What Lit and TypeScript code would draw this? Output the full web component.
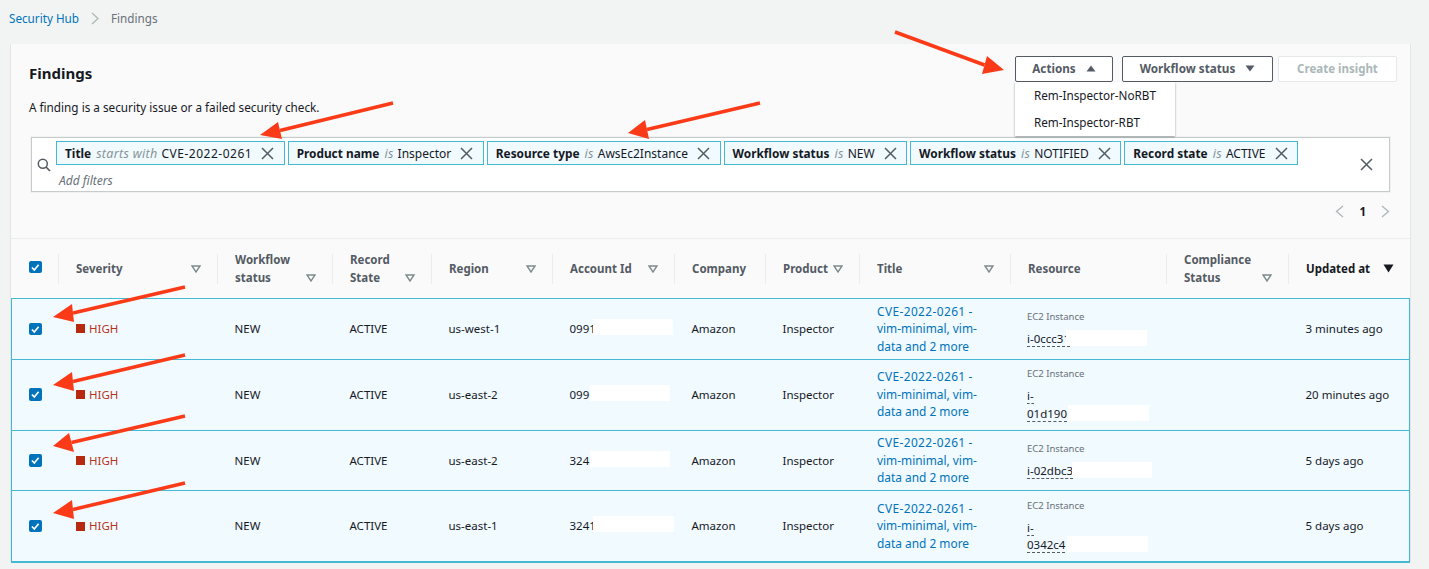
import { LitElement, html, css, svg } from "lit";
import { customElement } from "lit/decorators.js";

const COLS = [
  { label: "Severity", sort: true },
  { label: "Workflow status", sort: true },
  { label: "Record State", sort: true },
  { label: "Region", sort: true },
  { label: "Account Id", sort: true },
  { label: "Company", sort: false },
  { label: "Product", sort: true },
  { label: "Title", sort: true },
  { label: "Resource", sort: false },
  { label: "Compliance Status", sort: true },
  { label: "Updated at", sort: true, active: true },
];

// acctShift / idShift: how far the white redaction box sits from the end of the text
const ROWS = [
  { region: "us-west-1", account: "0991", acctMask: 80, acctShift: -3, id: ["i-0ccc31"], idMask: 81, idShift: -4, updated: "3 minutes ago" },
  { region: "us-east-2", account: "099", acctMask: 80, acctShift: 1, id: ["i-", "01d190"], idMask: 81, idShift: 1, updated: "20 minutes ago" },
  { region: "us-east-2", account: "324", acctMask: 80, acctShift: 1, id: ["i-02dbc3"], idMask: 80, idShift: -1, updated: "5 days ago" },
  { region: "us-east-1", account: "3241", acctMask: 81, acctShift: -3, id: ["i-", "0342c4"], idMask: 81, idShift: 2, updated: "5 days ago" },
];

const TOKENS = [
  ["Title", "starts with", "CVE-2022-0261"],
  ["Product name", "is", "Inspector"],
  ["Resource type", "is", "AwsEc2Instance"],
  ["Workflow status", "is", "NEW"],
  ["Workflow status", "is", "NOTIFIED"],
  ["Record state", "is", "ACTIVE"],
];

// shaft start, tip, then the two back corners of the head
const ARROWS = [
  [895, 32, 1004, 70, 987, 56, 982, 74],
  [393, 103, 260, 135, 278, 122, 282, 139],
  [760, 103, 628, 133, 645, 120, 649, 139],
  [185, 287, 53, 317, 72, 304, 74, 322],
  [185, 355, 53, 385, 72, 372, 74, 391],
  [185, 416, 53, 446, 69, 433, 74, 452],
  [185, 483, 53, 513, 72, 500, 74, 519],
];

const closeIcon = html`<svg class="x" viewBox="0 0 13 13" width="13" height="13">
  <path d="M1 1l11 11M12 1L1 12" fill="none" stroke="#545b64" stroke-width="1.5" />
</svg>`;

@customElement("app-root")
export class AppRoot extends LitElement {
  static styles = css`
    :host {
      display: block;
      position: relative;
      height: 569px;
      overflow: hidden;
      background: #f2f3f3;
      font-family: "Noto Sans", "Liberation Sans", sans-serif;
      font-size: 12px;
      color: #16191f;
    }
    .crumbs {
      height: 44px;
      box-sizing: border-box;
      padding: 10px 0 0 9px;
      display: flex;
      align-items: flex-start;
      line-height: 17px;
      font-size: 11.7px;
      color: #687078;
    }
    .crumbs a { color: #0073bb; }
    .crumbs svg { margin: 2px 12px 0 12px; }
    .card {
      margin: 0 19px 0 11px;
      background: #fafafa;
      box-shadow: -1px 0 0 #e3e5e6, 1px 0 0 #e3e5e6;
      height: 518px;
    }
    .top {
      position: relative;
      display: flex;
      justify-content: space-between;
      padding: 12px 13px 0 18px;
    }
    h1 {
      margin: 8px 0 0;
      font-size: 15px;
      line-height: 18px;
      font-weight: 700;
    }
    .buttons { display: flex; }
    .btn {
      height: 26px;
      box-sizing: border-box;
      padding-bottom: 2px;
      border: 1px solid #545b64;
      border-radius: 2px;
      background: #fff;
      color: #545b64;
      font-weight: 700;
      font-size: 11.7px;
      display: flex;
      align-items: center;
      justify-content: center;
      gap: 10px;
    }
    .btn.actions { width: 98px; margin-right: 9px; }
    .btn.status { width: 151px; margin-right: 5px; }
    .btn.create {
      width: 119px;
      border-color: #e6e9e9;
      color: #aab7b8;
      font-size: 11.5px;
    }
    .menu {
      position: absolute;
      left: 1004px;
      top: 38px;
      width: 160px;
      height: 54px;
      background: #fff;
      box-shadow: 0 1px 2px rgba(0, 28, 36, 0.4);
      z-index: 2;
    }
    .menu div {
      height: 26.5px;
      line-height: 26.5px;
      padding-left: 19px;
      font-size: 11.7px;
      color: #16191f;
    }
    .desc {
      margin: 17px 0 0 18px;
      line-height: 17px;
      font-size: 11.74px;
    }
    .filter {
      display: flex;
      margin: 21px 20px 0 20px;
      height: 55px;
      box-sizing: border-box;
      background: #fff;
      border: 1px solid #c6cbcb;
      box-shadow: 0 0 0 1px #f0f1f1;
    }
    .search { width: 24px; flex: none; padding: 20px 0 0 5px; box-sizing: border-box; }
    .filter-main { flex: 1; padding-top: 3px; }
    .tokens { display: flex; gap: 3px; }
    .token {
      height: 24px;
      box-sizing: border-box;
      border: 1px solid #44b9d6;
      background: #f1faff;
      padding: 0 9.5px 0 8px;
      display: flex;
      align-items: center;
      white-space: nowrap;
      font-size: 12px;
    }
    .token b { font-weight: 700; font-size: 11.85px; }
    .token i { color: #879596; margin: 0 4px 0 5px; font-size: 12.5px; letter-spacing: 0.3px; }
    .token .num { letter-spacing: 0.5px; }
    .token .x { margin-left: 9px; }
    .add {
      margin: 8px 0 0 3px;
      font-style: italic;
      color: #687078;
      font-size: 12px;
      line-height: 16px;
    }
    .clear { width: 46px; flex: none; display: flex; align-items: center; justify-content: center; }
    .pager {
      display: flex;
      justify-content: flex-end;
      align-items: center;
      height: 39px;
      padding-right: 20px;
      gap: 15px;
      font-weight: 700;
      font-size: 11.5px;
    }
    .grid {
      display: grid;
      grid-template-columns: 47px 159px 115px 99px 121px 122px 91px 94px 151px 156px 122px 122px;
    }
    .head {
      margin-top: 7px;
      height: 60px;
      border-top: 1px solid #eaeded;
      box-sizing: border-box;
      align-items: center;
    }
    .hc {
      position: relative;
      height: 30px;
      box-sizing: border-box;
      padding: 0 16px 0 18px;
      display: flex;
      align-items: center;
    }
    .hc::before {
      content: "";
      position: absolute;
      left: 0;
      top: 0;
      bottom: 0;
      width: 1px;
      background: #eaeded;
    }
    .hc.has-check::before { display: none; }
    .hc.has-check { padding: 0 0 3px 18px; }
    .hc-inner {
      flex: 1;
      display: flex;
      align-items: flex-end;
      justify-content: space-between;
      font-weight: 700;
      font-size: 11.5px;
      line-height: 17.5px;
      color: #545b64;
    }
    .hc-inner.active { color: #16191f; }
    .hc-inner svg { flex: none; margin: 0 0 4px 4px; }
    .check {
      width: 12.5px;
      height: 12.5px;
      display: block;
      border-radius: 2px;
      background: #0073bb;
    }
    .row {
      background: #f1faff;
      border-top: 1px solid #44b9d6;
      box-sizing: border-box;
      box-shadow: inset 1px 0 0 #44b9d6, inset -1px 0 0 #44b9d6;
      align-items: center;
      font-size: 11.5px;
      line-height: 17.5px;
    }
    .row.last { border-bottom: 2px solid #44b9d6; }
    .cell { padding: 0 8px 0 17.5px; }
    .cell.check-cell { padding: 0 0 0 18px; }
    .cell.title { padding: 3.5px 8px 3.5px 18px; color: #0073bb; font-size: 11.9px; }
    .cell.title span { letter-spacing: 0.4px; }
    .cell.res { padding: 7.5px 0 7.5px 17px; }
    .cell.account { padding-right: 0; }
    .cell.account .mask { margin-top: -1px; }
    .nowrap { white-space: nowrap; }
    .high { color: #b7341a; display: flex; align-items: center; gap: 4.5px; }
    .high span {
      width: 9px;
      height: 9px;
      background: #b7290f;
    }
    .res-type {
      font-size: 9.5px;
      line-height: 14px;
      color: #687078;
      margin-bottom: 6px;
    }
    .res-id { border-bottom: 1px dashed #545b64; }
    .mask {
      display: inline-block;
      vertical-align: top;
      height: 16px;
      background: #fff;
    }
    .arrows {
      position: absolute;
      left: 0;
      top: 0;
      z-index: 3;
      pointer-events: none;
    }
  `;

  private sortIcon(active?: boolean) {
    if (active) {
      return html`<svg width="11" height="9" viewBox="0 0 11 9"><path d="M0.5 0.5h10L5.5 8.5z" fill="#16191f" /></svg>`;
    }
    return html`<svg width="10" height="8" viewBox="0 0 10 8"><path d="M1 1h8L5 7z" fill="#fafafa" stroke="#7d8b8c" stroke-width="1.4" /></svg>`;
  }

  private checkbox() {
    return html`<svg class="check" viewBox="0 0 13 13">
      <path d="M3 6.8l2.5 2.5L10 3.8" fill="none" stroke="#fff" stroke-width="1.7" />
    </svg>`;
  }

  private row(r: (typeof ROWS)[number], i: number) {
    const last = i === ROWS.length - 1;
    return html`<div class="grid row ${last ? "last" : ""}">
      <div class="cell check-cell">${this.checkbox()}</div>
      <div class="cell"><div class="high"><span></span>HIGH</div></div>
      <div class="cell">NEW</div>
      <div class="cell">ACTIVE</div>
      <div class="cell">${r.region}</div>
      <div class="cell account nowrap">
        ${r.account}<span class="mask" style="width:${r.acctMask}px;margin-left:${r.acctShift}px"></span>
      </div>
      <div class="cell">Amazon</div>
      <div class="cell">Inspector</div>
      <div class="cell title"><span>CVE-2022-0261</span> -<br />vim-minimal, vim-<br />data and 2 more</div>
      <div class="cell res">
        <div class="res-type">EC2 Instance</div>
        ${r.id.map(
          (part, n) => html`<div class="nowrap">
            <span class="res-id">${part}</span>${n === r.id.length - 1
              ? html`<span class="mask" style="width:${r.idMask}px;margin-left:${r.idShift}px"></span>`
              : ""}
          </div>`
        )}
      </div>
      <div class="cell"></div>
      <div class="cell nowrap">${r.updated}</div>
    </div>`;
  }

  render() {
    return html`
      <div class="crumbs">
        <a>Security Hub</a>
        <svg width="8" height="13" viewBox="0 0 8 13"><path d="M1 1l6 5.5L1 12" fill="none" stroke="#aab7b8" stroke-width="1.2" /></svg>
        <span>Findings</span>
      </div>
      <div class="card">
        <div class="top">
          <h1>Findings</h1>
          <div class="buttons">
            <div class="btn actions">Actions
              <svg width="10" height="7" viewBox="0 0 10 7"><path d="M5 0.5l4.5 6h-9z" fill="#545b64" /></svg>
            </div>
            <div class="btn status">Workflow status
              <svg width="10" height="7" viewBox="0 0 10 7"><path d="M0.5 0.5h9l-4.5 6z" fill="#545b64" /></svg>
            </div>
            <div class="btn create">Create insight</div>
          </div>
          <div class="menu">
            <div>Rem-Inspector-NoRBT</div>
            <div>Rem-Inspector-RBT</div>
          </div>
        </div>
        <div class="desc">A finding is a security issue or a failed security check.</div>
        <div class="filter">
          <div class="search">
            <svg width="14" height="14" viewBox="0 0 14 14">
              <circle cx="5.8" cy="5.8" r="4.5" fill="none" stroke="#545b64" stroke-width="1.5" />
              <path d="M9 9l4 4" stroke="#545b64" stroke-width="1.7" />
            </svg>
          </div>
          <div class="filter-main">
            <div class="tokens">
              ${TOKENS.map(
                ([k, op, v]) => html`<div class="token"><b>${k}</b><i>${op}</i><span class=${/\d{4}/.test(v) ? "num" : ""}>${v}</span>${closeIcon}</div>`
              )}
            </div>
            <div class="add">Add filters</div>
          </div>
          <div class="clear">${closeIcon}</div>
        </div>
        <div class="pager">
          <svg width="9" height="13" viewBox="0 0 9 13"><path d="M8 1L1.5 6.5 8 12" fill="none" stroke="#aab7b8" stroke-width="1.3" /></svg>
          <span>1</span>
          <svg width="9" height="13" viewBox="0 0 9 13"><path d="M1 1l6.5 5.5L1 12" fill="none" stroke="#aab7b8" stroke-width="1.3" /></svg>
        </div>
        <div class="grid head">
          <div class="hc has-check">${this.checkbox()}</div>
          ${COLS.map(
            (c) => html`<div class="hc">
              <div class="hc-inner ${c.active ? "active" : ""}">
                <span>${c.label}</span>${c.sort ? this.sortIcon(c.active) : ""}
              </div>
            </div>`
          )}
        </div>
        ${ROWS.map((r, i) => this.row(r, i))}
      </div>
      <svg class="arrows" width="1429" height="569" viewBox="0 0 1429 569">
        ${ARROWS.map(
          ([x1, y1, tx, ty, ax, ay, bx, by]) => svg`
            <line x1=${x1} y1=${y1} x2=${(ax + bx) / 2} y2=${(ay + by) / 2} stroke="#fb3a17" stroke-width="3.5" />
            <polygon points="${tx},${ty} ${ax},${ay} ${bx},${by}" fill="#fb3a17" />`
        )}
      </svg>
    `;
  }
}
